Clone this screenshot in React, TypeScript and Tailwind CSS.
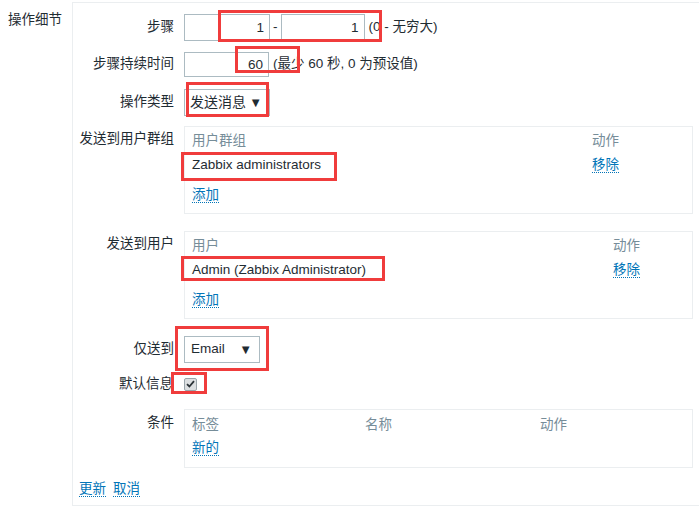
import React from 'react';

const font = { fontFamily: '"Liberation Sans", "Noto Sans CJK SC", sans-serif' };

const Link: React.FC<{ children: React.ReactNode; className?: string }> = ({ children, className = '' }) => (
  <span className={`text-[#0275b8] border-b border-dotted border-[#0275b8] leading-[15px] cursor-pointer ${className}`}>{children}</span>
);

const Label: React.FC<{ children: React.ReactNode; className?: string }> = ({ children, className = '' }) => (
  <div className={`w-[111px] shrink-0 pr-[10px] text-right ${className}`}>{children}</div>
);

const Arrow = () => <span className="text-[13px] leading-none">▼</span>;

// red annotation frames drawn over the screenshot
const marks = [
  'left-[218px] top-[10px] w-[164px] h-[32px]',
  'left-[235px] top-[46px] w-[65px] h-[27px]',
  'left-[186px] top-[82px] w-[83px] h-[35px]',
  'left-[181px] top-[152px] w-[156px] h-[29px]',
  'left-[181px] top-[256px] w-[204px] h-[25px]',
  'left-[175px] top-[326px] w-[94px] h-[45px]',
  'left-[171px] top-[372px] w-[36px] h-[22px]',
];

export default function App() {
  return (
    <div className="relative w-[699px] h-[508px] bg-white text-[#1f2c33] text-[13.5px] overflow-hidden" style={font}>
      <div className="flex">
        <div className="w-[72px] shrink-0 pl-[8px] pt-[10px]">操作细节</div>

        <div className="flex-1 mt-[2px] h-[504px] border-l border-t border-b border-[#ebeef0] pt-[11px]">
          {/* 步骤 */}
          <div className="flex items-center h-[27px]">
            <Label>步骤</Label>
            <div className="w-[86px] h-[27px] border border-[#acbbc2] text-right pr-[5px] leading-[25px]">1</div>
            <span className="mx-[3px]">-</span>
            <div className="w-[84px] h-[27px] border border-[#acbbc2] text-right pr-[5px] leading-[25px]">1</div>
            <span className="ml-[4px]">(0 - 无穷大)</span>
          </div>

          {/* 步骤持续时间 */}
          <div className="flex items-center h-[25px] mt-[11px]">
            <Label>步骤持续时间</Label>
            <div className="w-[85px] h-[25px] border border-[#acbbc2] text-right pr-[5px] leading-[23px]">60</div>
            <span className="ml-[4px]">(最少 60 秒, 0 为预设值)</span>
          </div>

          {/* 操作类型 */}
          <div className="flex items-center h-[27px] mt-[12px]">
            <Label>操作类型</Label>
            <div className="w-[86px] h-[27px] border border-[#acbbc2] flex items-center justify-between pl-[5px] pr-[7px]">
              <span className="text-[14px]">发送消息</span>
              <Arrow />
            </div>
          </div>

          {/* 发送到用户群组 */}
          <div className="flex mt-[10px]">
            <Label className="pt-[3px]">发送到用户群组</Label>
            <div className="w-[509px] h-[88px] border border-[#ebeef0] pl-[7px] pt-[4px]">
              <div className="flex text-[#768d99] h-[20px] items-center">
                <span className="w-[400px]">用户群组</span>
                <span>动作</span>
              </div>
              <div className="flex h-[24px] items-center mt-[2px]">
                <span className="w-[400px]">Zabbix administrators</span>
                <Link>移除</Link>
              </div>
              <div className="flex h-[24px] items-center mt-[6px]">
                <Link>添加</Link>
              </div>
            </div>
          </div>

          {/* 发送到用户 */}
          <div className="flex mt-[17px]">
            <Label className="pt-[3px]">发送到用户</Label>
            <div className="w-[509px] h-[88px] border border-[#ebeef0] pl-[7px] pt-[4px]">
              <div className="flex text-[#768d99] h-[20px] items-center">
                <span className="w-[421px]">用户</span>
                <span>动作</span>
              </div>
              <div className="flex h-[24px] items-center mt-[2px]">
                <span className="w-[421px]">Admin (Zabbix Administrator)</span>
                <Link>移除</Link>
              </div>
              <div className="flex h-[24px] items-center mt-[6px]">
                <Link>添加</Link>
              </div>
            </div>
          </div>

          {/* 仅送到 */}
          <div className="flex items-center h-[27px] mt-[17px]">
            <Label>仅送到</Label>
            <div className="w-[76px] h-[27px] border border-[#acbbc2] flex items-center justify-between pl-[6px] pr-[7px]">
              <span>Email</span>
              <Arrow />
            </div>
          </div>

          {/* 默认信息 */}
          <div className="flex items-center h-[20px] mt-[11px]">
            <Label className="pr-[11px]">默认信息</Label>
            <div className="w-[13px] h-[13px] rounded-[2px] border border-[#9aa5ab] bg-[#dcdfe1] flex items-center justify-center">
              <svg width="9" height="8" viewBox="0 0 9 8">
                <path d="M1 4.2 L3.4 6.5 L8 1.2" stroke="#2b3338" strokeWidth="1.8" fill="none" />
              </svg>
            </div>
          </div>

          {/* 条件 */}
          <div className="flex mt-[15px]">
            <Label className="pt-[4px]">条件</Label>
            <div className="w-[509px] h-[59px] border border-[#ebeef0] pl-[7px] pt-[5px]">
              <div className="flex text-[#768d99] h-[20px] items-center">
                <span className="w-[173px]">标签</span>
                <span className="w-[175px]">名称</span>
                <span>动作</span>
              </div>
              <div className="flex h-[24px] items-center mt-[1px]">
                <Link>新的</Link>
              </div>
            </div>
          </div>

          {/* buttons */}
          <div className="flex items-center gap-[7px] pl-[6px] mt-[11px] h-[20px]">
            <Link>更新</Link>
            <Link>取消</Link>
          </div>
        </div>
      </div>

      {marks.map((m, i) => (
        <div key={i} className={`absolute border-[3px] border-[#f03c3c] ${m}`} />
      ))}
    </div>
  );
}
